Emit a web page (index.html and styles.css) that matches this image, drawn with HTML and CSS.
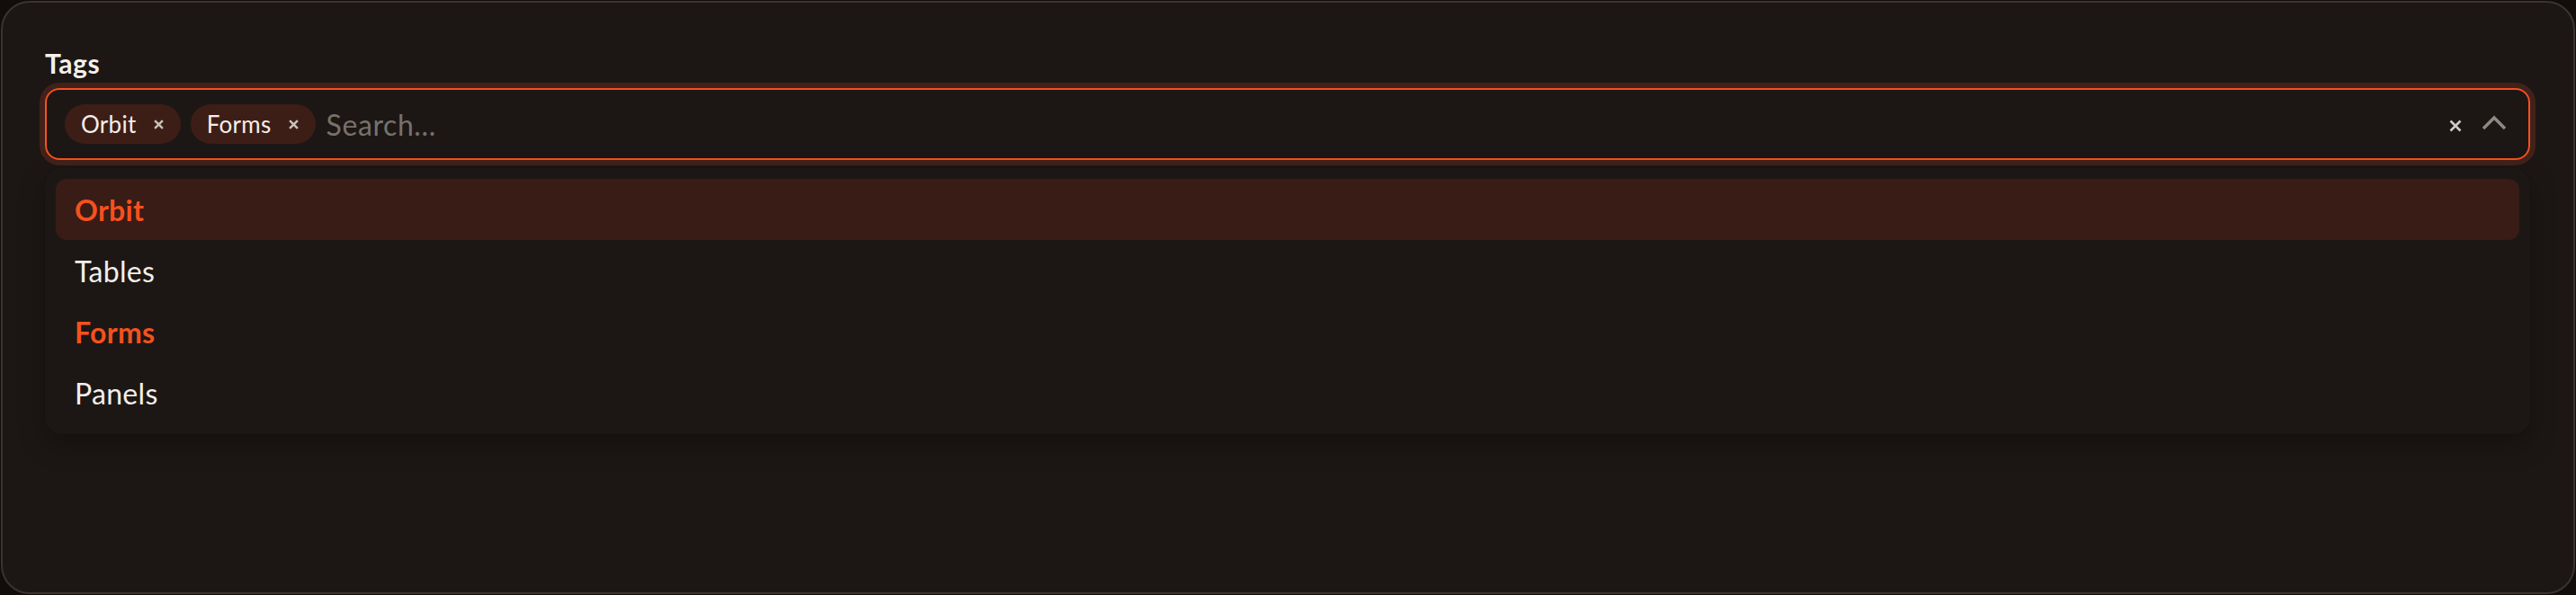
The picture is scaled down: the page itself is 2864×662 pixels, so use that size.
FILE: index.html
```html
<!DOCTYPE html>
<html lang="en">
<head>
<meta charset="utf-8">
<title>Tags</title>
<link rel="stylesheet" href="styles.css">
</head>
<body>
<div class="card">
  <div class="label">Tags</div>
  <div class="control">
    <span class="chip"><span class="chip-text">Orbit</span><svg class="chip-x" viewBox="0 0 10 10"><path d="M1 1L9 9M9 1L1 9"/></svg></span>
    <span class="chip"><span class="chip-text">Forms</span><svg class="chip-x" viewBox="0 0 10 10"><path d="M1 1L9 9M9 1L1 9"/></svg></span>
    <span class="placeholder">Search...</span>
    <span class="spacer"></span>
    <svg class="clear" viewBox="0 0 14 14"><path d="M1.5 1.5L12.5 12.5M12.5 1.5L1.5 12.5"/></svg>
    <svg class="chevron" viewBox="0 0 28 17"><path d="M2 15L14 3L26 15"/></svg>
  </div>
  <ul class="menu">
    <li class="item active selected">Orbit</li>
    <li class="item">Tables</li>
    <li class="item selected">Forms</li>
    <li class="item">Panels</li>
  </ul>
</div>
</body>
</html>
```
FILE: styles.css
```css
html, body {
  margin: 0;
  padding: 0;
  background: #110d0b;
}
body {
  padding: 1px;
  font-family: Lato, "Noto Sans", sans-serif;
}
.card {
  box-sizing: border-box;
  width: 2862px;
  height: 660px;
  background: #1c1714;
  border: 2px solid #3a3330;
  border-radius: 32px;
  padding: 47px 48px 0 47px;
}
.label {
  color: #f5f0eb;
  font-size: 30px;
  font-weight: 700;
  letter-spacing: 0.6px;
  line-height: 40px;
  height: 40px;
  margin-bottom: 8px;
}
.control {
  box-sizing: border-box;
  height: 80px;
  border: 2px solid #f4511e;
  border-radius: 16px;
  box-shadow: 0 0 0 6px #42211a;
  display: flex;
  align-items: center;
  padding: 0 24px 0 20px;
  gap: 11px;
}
.chip {
  display: inline-flex;
  align-items: center;
  height: 44px;
  padding: 0 19px 0 18px;
  border-radius: 22px;
  background: #3d1e16;
  color: #f3eee9;
  font-size: 26px;
  letter-spacing: 0.3px;
  gap: 19px;
}
.chip-x {
  width: 11px;
  height: 11px;
  stroke: #c9c2bd;
  stroke-width: 2.2;
  fill: none;
}
.placeholder {
  color: #77716c;
  font-size: 32px;
  letter-spacing: 0.6px;
  margin-left: 1px;
}
.spacer {
  flex: 1;
}
.clear {
  width: 14px;
  height: 14px;
  stroke: #d0cbc7;
  stroke-width: 2.6;
  fill: none;
  margin-top: 4px;
}
.chevron {
  width: 28px;
  height: 17px;
  stroke: #8e8985;
  stroke-width: 3.4;
  fill: none;
  margin-left: 11px;
  margin-top: -4px;
}
.menu {
  list-style: none;
  margin: 9px 0 0 0;
  padding: 12px;
  border-radius: 18px;
  background: #1c1714;
  box-shadow: 0 12px 30px rgba(0, 0, 0, 0.28), 0 0 0 1px rgba(0, 0, 0, 0.08);
}
.item {
  height: 68px;
  display: flex;
  align-items: center;
  padding-left: 21px;
  border-radius: 12px;
  color: #f3eee9;
  font-size: 32px;
  letter-spacing: 0.3px;
}
.item.selected {
  color: #f4511e;
  font-weight: 700;
}
.item.active {
  background: #381c15;
}
```
